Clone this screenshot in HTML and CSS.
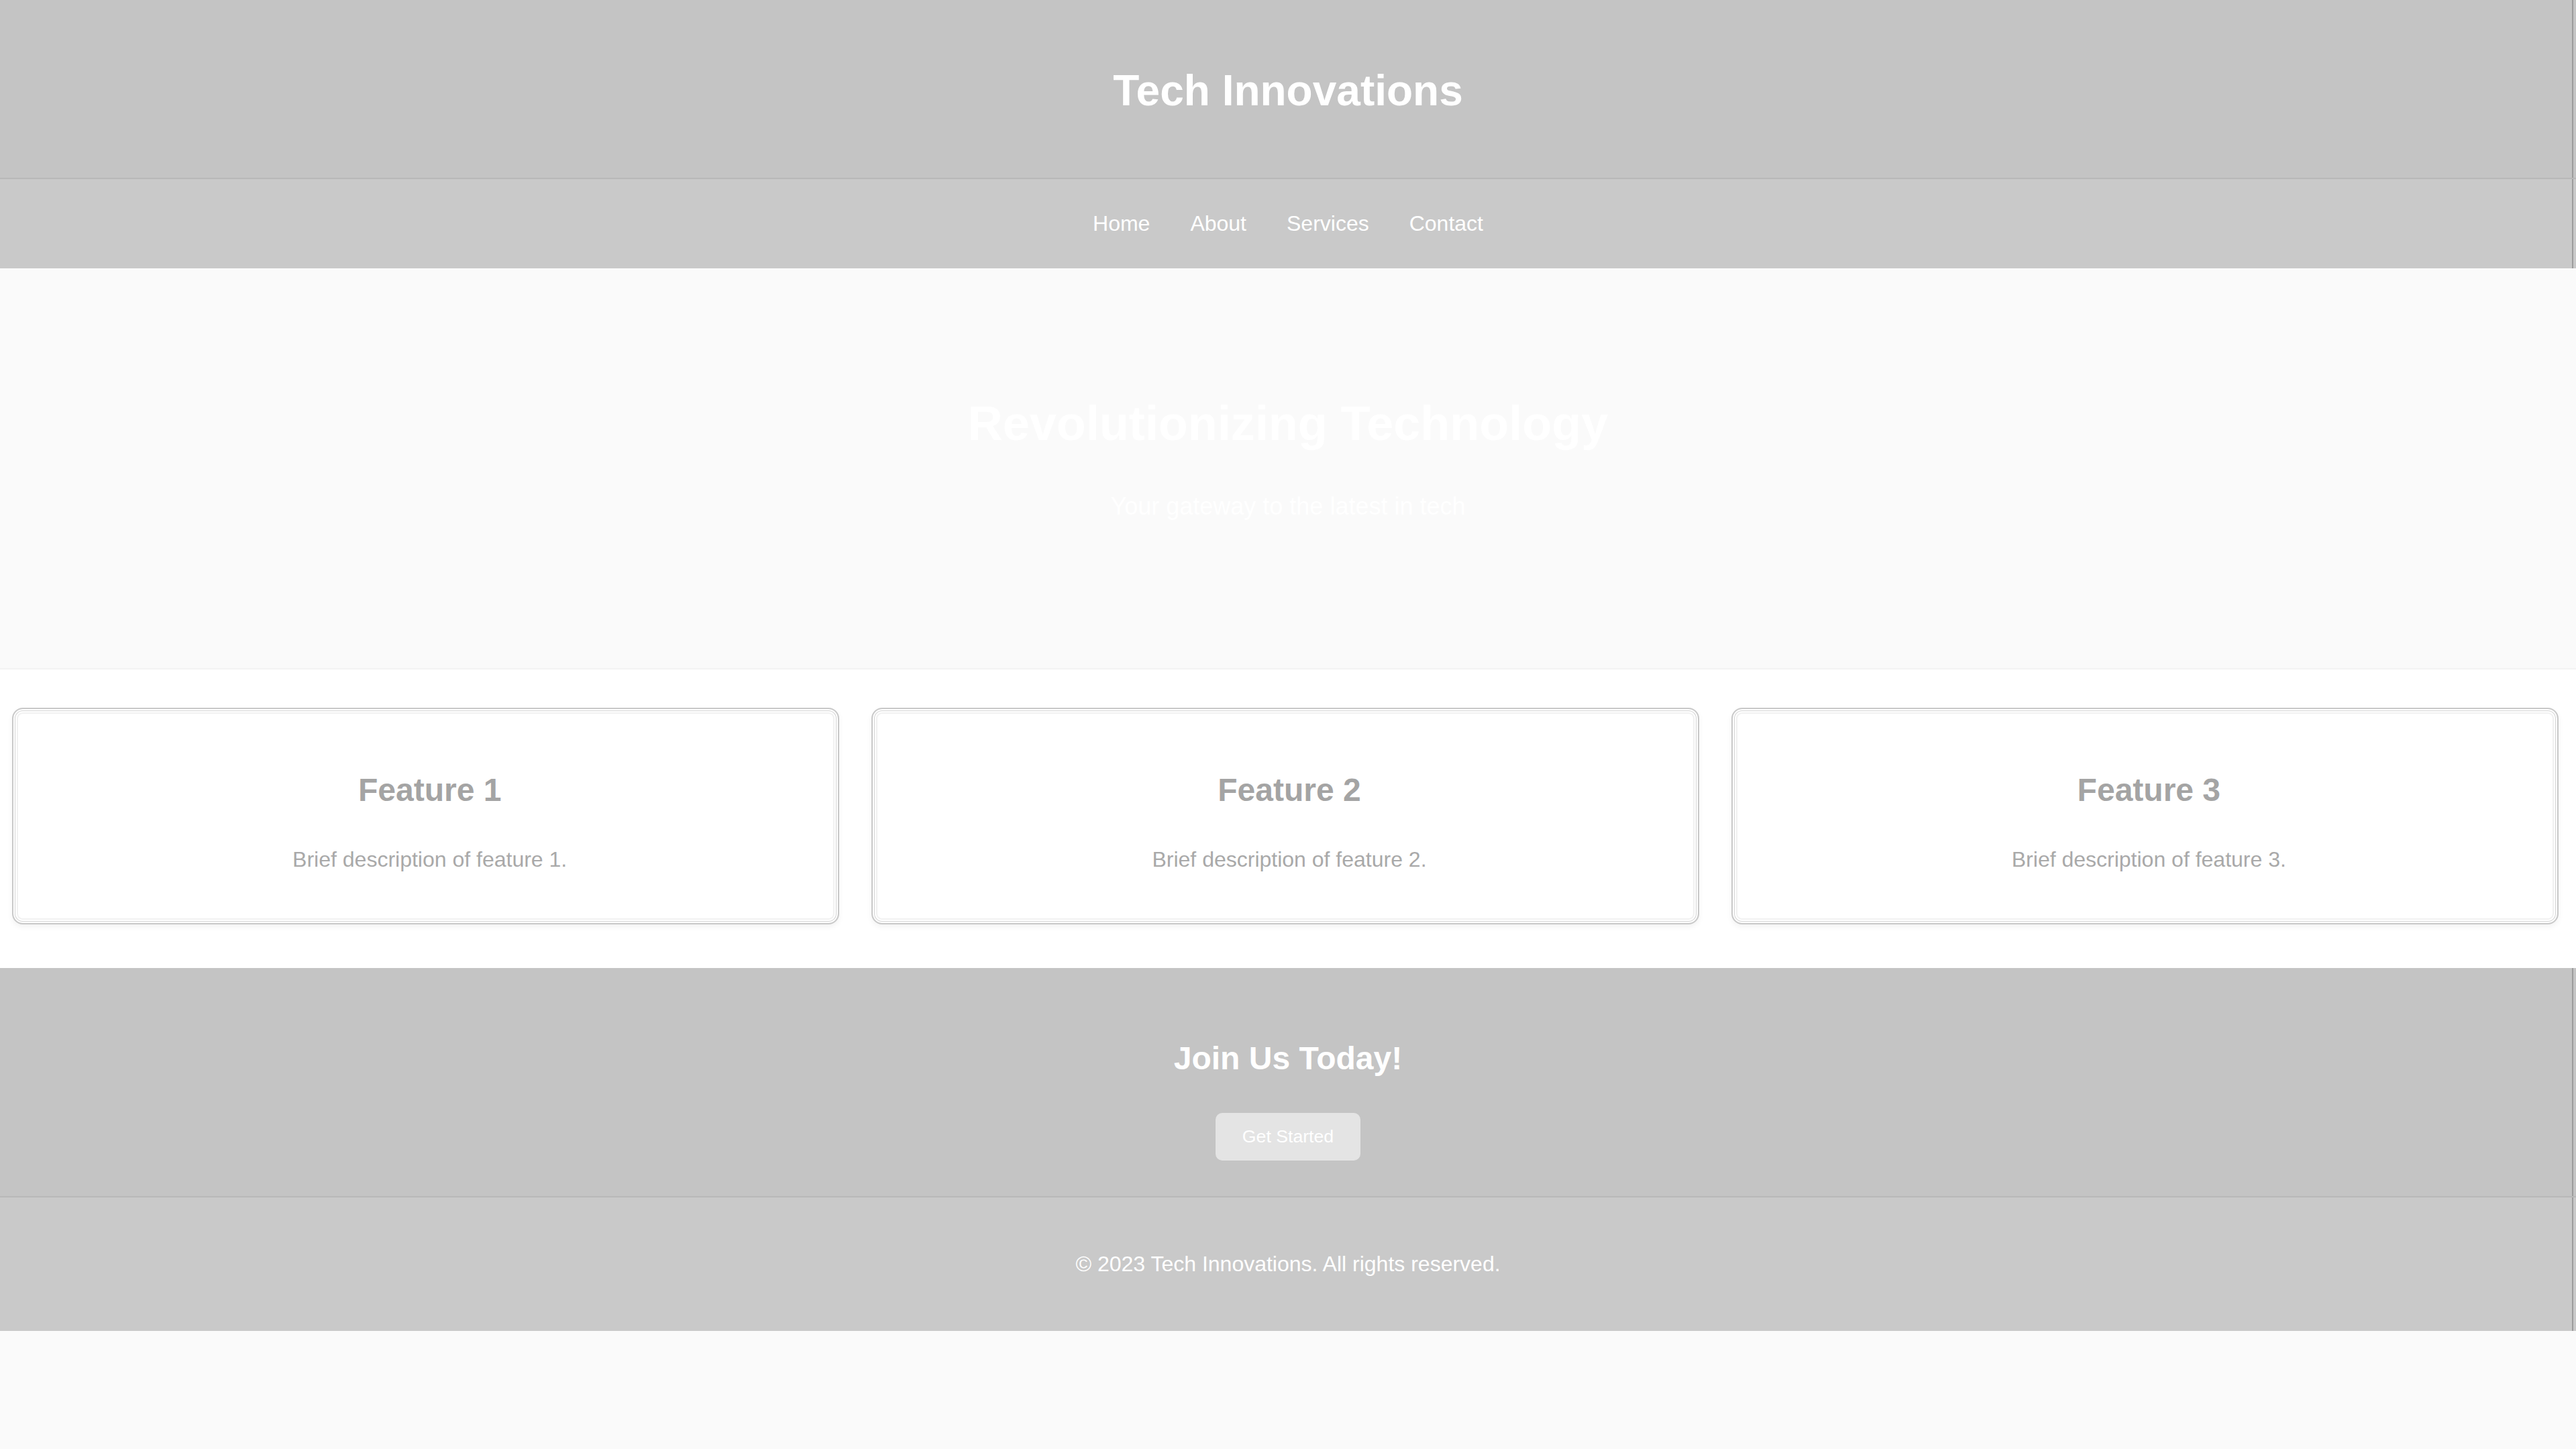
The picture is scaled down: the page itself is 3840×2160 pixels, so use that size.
FILE: index.html
```html
<!DOCTYPE html>
<html lang="en">
<head>
<meta charset="utf-8">
<title>Tech Innovations</title>
<link rel="stylesheet" href="styles.css">
</head>
<body>
<header class="site-header">
  <h1 class="brand">Tech Innovations</h1>
</header>
<nav class="site-nav">
  <ul class="nav-list">
    <li><a class="nav-link" href="#">Home</a></li>
    <li><a class="nav-link" href="#">About</a></li>
    <li><a class="nav-link" href="#">Services</a></li>
    <li><a class="nav-link" href="#">Contact</a></li>
  </ul>
</nav>
<section class="hero">
  <h2 class="hero-title">Revolutionizing Technology</h2>
  <p class="hero-sub">Your gateway to the latest in tech</p>
</section>
<section class="features">
  <div class="card">
    <h3 class="card-title">Feature 1</h3>
    <p class="card-text">Brief description of feature 1.</p>
  </div>
  <div class="card">
    <h3 class="card-title">Feature 2</h3>
    <p class="card-text">Brief description of feature 2.</p>
  </div>
  <div class="card">
    <h3 class="card-title">Feature 3</h3>
    <p class="card-text">Brief description of feature 3.</p>
  </div>
</section>
<section class="cta">
  <h2 class="cta-title">Join Us Today!</h2>
  <button class="cta-button" type="button">Get Started</button>
</section>
<footer class="site-footer">
  <p class="footer-text">&copy; 2023 Tech Innovations. All rights reserved.</p>
</footer>
</body>
</html>
```
FILE: styles.css
```css
* {
  box-sizing: border-box;
}

html, body {
  margin: 0;
  padding: 0;
}

body {
  background: #fafafa;
  font-family: "Liberation Sans", Arial, sans-serif;
  color: #ffffff;
}

.site-header {
  background:
    linear-gradient(to left, transparent 4px, #9c9c9c 4px, #9c9c9c 6px, transparent 6px),
    #c4c4c4;
  padding: 40px 40px;
  border-bottom: 2px solid #b8b8b8;
  text-align: center;
}

.brand {
  margin: 58px 0 53px;
  font-size: 64px;
  font-weight: bold;
  line-height: normal;
  color: #ffffff;
}

.site-nav {
  background:
    linear-gradient(to left, transparent 4px, #9c9c9c 4px, #9c9c9c 6px, transparent 6px),
    #c9c9c9;
  padding: 48px 40px;
}

.nav-list {
  list-style: none;
  margin: 0;
  padding: 0;
  display: flex;
  justify-content: center;
  gap: 60px;
}

.nav-link {
  font-size: 32px;
  line-height: normal;
  color: #ffffff;
  text-decoration: none;
}

.hero {
  background: #fafafa;
  padding: 190px 40px 184px;
  border-bottom: 2px solid #f3f3f3;
  text-align: center;
}

.hero-title {
  margin: 0 0 62px;
  font-size: 72px;
  font-weight: bold;
  line-height: normal;
  color: #ffffff;
}

.hero-sub {
  margin: 0 0 36px;
  font-size: 36px;
  line-height: normal;
  color: #ffffff;
}

.features {
  background: #ffffff;
  display: flex;
  gap: 48px;
  padding: 57px 26px 65px 18px;
}

.card {
  flex: 1;
  background: #ffffff;
  border: 2px solid #c9c9c9;
  border-radius: 16px;
  padding: 40px 14px 40px 26px;
  text-align: center;
  box-shadow:
    inset 0 0 0 2px #ffffff,
    inset 0 0 0 3px #d4d4d4,
    inset 0 0 0 5px #ffffff,
    inset 0 0 0 7px #f1f1f1,
    0 4px 8px rgba(0, 0, 0, 0.05);
}

.card-title {
  margin: 53px 0 58px;
  font-size: 48px;
  font-weight: bold;
  line-height: normal;
  color: #a4a4a4;
}

.card-text {
  margin: 0 0 36px;
  font-size: 32px;
  line-height: normal;
  color: #a9a9a9;
}

.cta {
  background:
    linear-gradient(to left, transparent 4px, #9c9c9c 4px, #9c9c9c 6px, transparent 6px),
    #c4c4c4;
  padding: 54px 40px 53px;
  border-bottom: 2px solid #b8b8b8;
  text-align: center;
}

.cta-title {
  margin: 53px 0 54px;
  font-size: 48px;
  font-weight: bold;
  line-height: normal;
  color: #ffffff;
}

.cta-button {
  display: inline-block;
  margin: 0;
  padding: 20px 40px;
  border: none;
  border-radius: 10px;
  background: #e4e4e4;
  color: #ffffff;
  font-family: "Liberation Sans", Arial, sans-serif;
  font-size: 26.67px;
  line-height: normal;
  cursor: pointer;
}

.site-footer {
  background:
    linear-gradient(to left, transparent 4px, #9c9c9c 4px, #9c9c9c 6px, transparent 6px),
    #c9c9c9;
  padding: 81px 40px;
  text-align: center;
}

.footer-text {
  margin: 0;
  font-size: 32px;
  line-height: normal;
  color: #ffffff;
}
```
